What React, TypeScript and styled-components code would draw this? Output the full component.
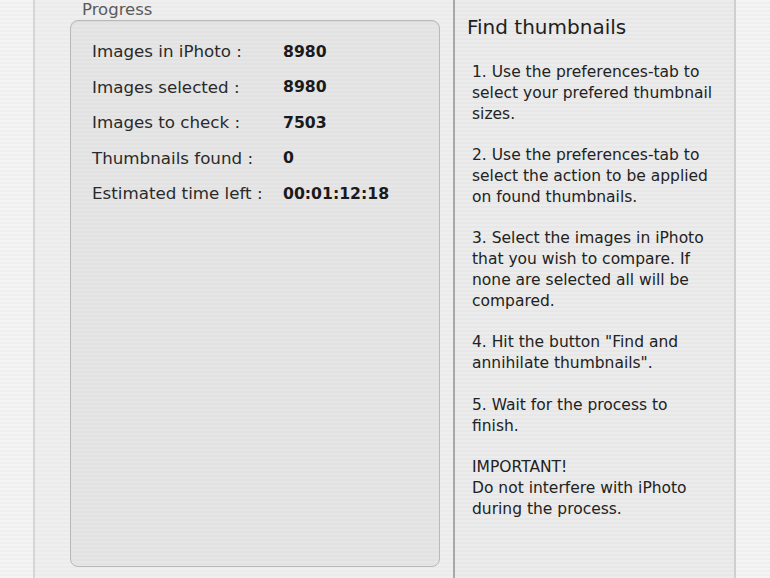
import styled, { createGlobalStyle } from "styled-components";

const GlobalStyle = createGlobalStyle`
  *, *::before, *::after {
    box-sizing: border-box;
  }
  html, body {
    margin: 0;
    padding: 0;
  }
  body {
    font-family: "DejaVu Sans", "Liberation Sans", sans-serif;
    color: #222;
  }
`;

const stripes = (base: string, line: string) => `
  background-color: ${base};
  background-image: repeating-linear-gradient(
    to bottom,
    ${base} 0px,
    ${base} 2px,
    ${line} 2px,
    ${line} 4px
  );
`;

const WindowStyle = styled.div`
  display: flex;
  width: 770px;
  height: 578px;
  overflow: hidden;
  ${stripes("#f4f4f4", "#efefef")}
`;

const GutterStyle = styled.div`
  width: 33px;
  flex-shrink: 0;
`;

const MainPanelStyle = styled.div`
  width: 420px;
  flex-shrink: 0;
  border-left: 2px solid #d6d6d6;
  padding: 0 13px 11px 35px;
  display: flex;
  flex-direction: column;
  ${stripes("#efefef", "#ebebeb")}
`;

const GroupTitle = styled.div`
  font-size: 16.5px;
  color: #5a5a5a;
  padding-left: 12px;
  height: 20px;
  line-height: 20px;
`;

const GroupBox = styled.div`
  flex: 1;
  border: 1px solid #b9b9b9;
  border-radius: 8px;
  padding: 18px 0 0 21px;
  display: flex;
  flex-direction: column;
  gap: 11.5px;
  box-shadow: inset 0 1px 1px rgba(0, 0, 0, 0.06);
  ${stripes("#e6e6e6", "#e2e2e2")}
`;

const Row = styled.div`
  display: flex;
  align-items: center;
  height: 24px;
`;

const Label = styled.span`
  width: 191px;
  flex-shrink: 0;
  font-size: 16.7px;
  color: #2a2a2a;
  white-space: nowrap;
`;

const Value = styled.span`
  font-size: 15.7px;
  font-weight: bold;
  color: #1a1a1a;
`;

const Divider = styled.div`
  width: 2px;
  flex-shrink: 0;
  background: #a9a9a9;
`;

const SidePanelStyle = styled.div`
  width: 281px;
  flex-shrink: 0;
  border-right: 2px solid #cfcfcf;
  padding: 14px 0 0 12px;
  ${stripes("#ececec", "#e7e7e7")}
`;

const SideTitle = styled.h2`
  margin: 0;
  font-size: 20px;
  font-weight: normal;
  color: #1e1e1e;
  line-height: 26px;
  white-space: nowrap;
`;

const Instructions = styled.div`
  margin: 22px 0 0 5px;
  font-size: 15.5px;
  line-height: 20.8px;
  color: #222;
`;

const Para = styled.p`
  margin: 0 0 20.8px;
`;

const Line = styled.span`
  display: block;
  white-space: nowrap;
`;

const stats = [
  { label: "Images in iPhoto :", value: "8980" },
  { label: "Images selected :", value: "8980" },
  { label: "Images to check :", value: "7503" },
  { label: "Thumbnails found :", value: "0" },
  { label: "Estimated time left :", value: "00:01:12:18" },
];

const steps = [
  ["1. Use the preferences-tab to", "select your prefered thumbnail", "sizes."],
  ["2. Use the preferences-tab to", "select the action to be applied", "on found thumbnails."],
  ["3. Select the images in iPhoto", "that you wish to compare. If", "none are selected all will be", "compared."],
  ["4. Hit the button \"Find and", "annihilate thumbnails\"."],
  ["5. Wait for the process to", "finish."],
  ["IMPORTANT!", "Do not interfere with iPhoto", "during the process."],
];

export default function App() {
  return (
    <>
      <GlobalStyle />
      <WindowStyle>
        <GutterStyle />
        <MainPanelStyle>
          <GroupTitle>Progress</GroupTitle>
          <GroupBox>
            {stats.map((s) => (
              <Row key={s.label}>
                <Label>{s.label}</Label>
                <Value>{s.value}</Value>
              </Row>
            ))}
          </GroupBox>
        </MainPanelStyle>
        <Divider />
        <SidePanelStyle>
          <SideTitle>Find thumbnails</SideTitle>
          <Instructions>
            {steps.map((lines, i) => (
              <Para key={i}>
                {lines.map((l) => (
                  <Line key={l}>{l}</Line>
                ))}
              </Para>
            ))}
          </Instructions>
        </SidePanelStyle>
      </WindowStyle>
    </>
  );
}
